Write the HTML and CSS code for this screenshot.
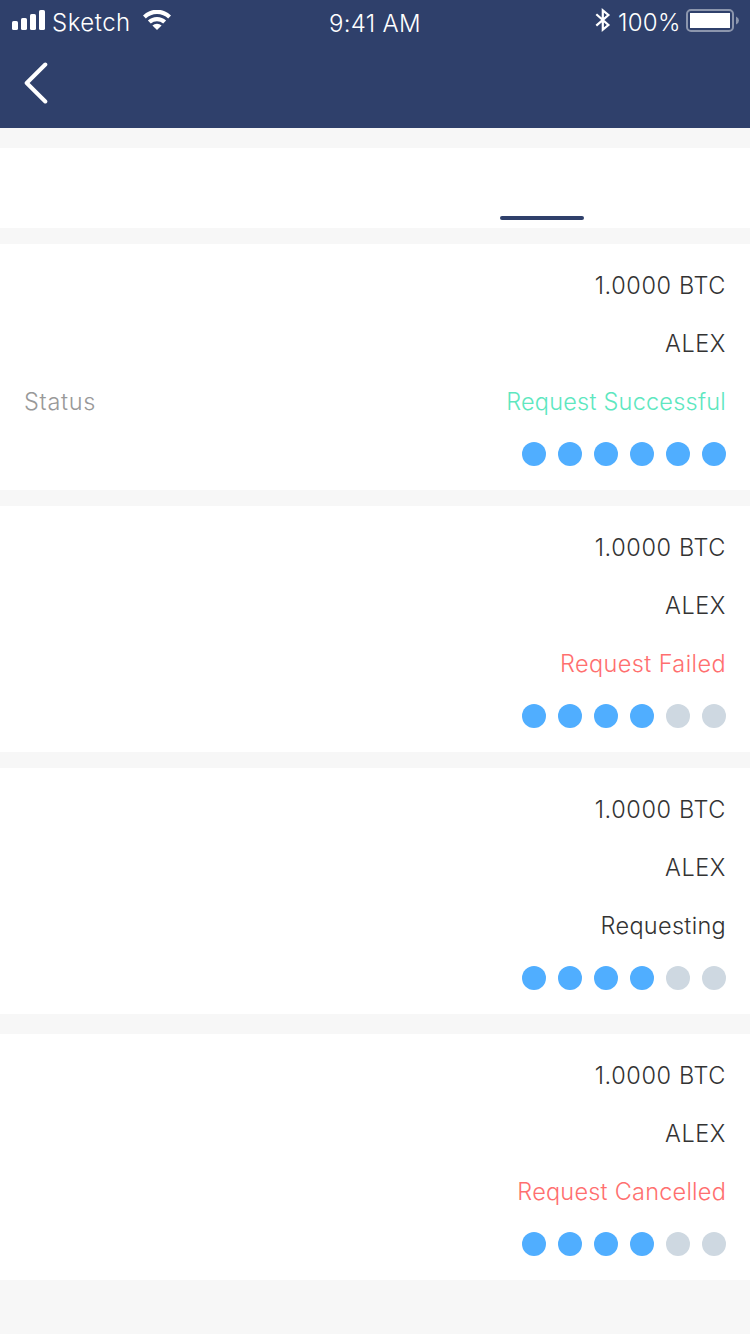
FILE: index.html
```html
<!DOCTYPE html>
<html lang="en">
<head>
<meta charset="utf-8">
<title>Requests</title>
<link rel="stylesheet" href="styles.css">
</head>
<body>
<header class="header">
  <div class="status-bar">
    <div class="status-left">
      <svg class="signal" width="34" height="20" viewBox="0 0 34 20" fill="#fff">
        <rect x="0" y="11" width="6" height="9" rx="1.6"/><rect x="9" y="8" width="6" height="12" rx="1.6"/><rect x="18" y="4" width="6" height="16" rx="1.6"/><rect x="27" y="0" width="6" height="20" rx="1.6"/>
      </svg>
      <span class="carrier">Sketch</span>
      <svg class="wifi" width="28" height="20" viewBox="0 0 28 20" fill="#fff">
        <path d="M0 5.4A20 20 0 0 1 28 5.4L25.2 8.5A16 16 0 0 0 2.8 8.5Z"/>
        <path d="M4.9 10.6A13.2 13.2 0 0 1 23.1 10.6L20.2 13.6A9.2 9.2 0 0 0 7.8 13.6Z"/>
        <path d="M9.4 15.5A6.6 6.6 0 0 1 18.6 15.5L14 20Z"/>
      </svg>
    </div>
    <span class="clock">9:41 AM</span>
    <div class="status-right">
      <svg class="bluetooth" width="16" height="24" viewBox="0 0 16 24" fill="none" stroke="#fff" stroke-width="2.2">
        <path d="M1.3 6.3L13.4 17L7.8 21.6V2.4L13.4 7L1.3 17.6"/>
      </svg>
      <span class="percent">100%</span>
      <svg class="battery" width="53" height="24" viewBox="0 0 53 24">
        <rect x="1" y="1" width="46" height="21" rx="4" fill="none" stroke="#fff" stroke-opacity=".45" stroke-width="2"/>
        <rect x="4" y="4" width="40" height="15" fill="#fff"/>
        <path d="M50 7.5Q53 9 53 11.5T50 15.5Z" fill="#fff" fill-opacity=".45"/>
      </svg>
    </div>
  </div>
  <nav class="nav-bar">
    <svg width="24" height="42" viewBox="0 0 24 42" fill="none" stroke="#fff" stroke-width="4" stroke-linecap="round" stroke-linejoin="round"><path d="M21.3 2.5L2.7 21L21.3 39.5"/></svg>
  </nav>
</header>
<div class="tabs"><span class="tab-indicator"></span></div>
<main class="list">
  <section class="card">
    <div class="row amount">1.0000 BTC</div>
    <div class="row name">ALEX</div>
    <div class="row"><span class="label">Status</span><span class="state success">Request Successful</span></div>
    <div class="dots"><i class="dot"></i><i class="dot"></i><i class="dot"></i><i class="dot"></i><i class="dot"></i><i class="dot"></i></div>
  </section>
  <section class="card">
    <div class="row amount">1.0000 BTC</div>
    <div class="row name">ALEX</div>
    <div class="row"><span class="state failed">Request Failed</span></div>
    <div class="dots"><i class="dot"></i><i class="dot"></i><i class="dot"></i><i class="dot"></i><i class="dot off"></i><i class="dot off"></i></div>
  </section>
  <section class="card">
    <div class="row amount">1.0000 BTC</div>
    <div class="row name">ALEX</div>
    <div class="row"><span class="state pending">Requesting</span></div>
    <div class="dots"><i class="dot"></i><i class="dot"></i><i class="dot"></i><i class="dot"></i><i class="dot off"></i><i class="dot off"></i></div>
  </section>
  <section class="card last">
    <div class="row amount">1.0000 BTC</div>
    <div class="row name">ALEX</div>
    <div class="row"><span class="state cancelled">Request Cancelled</span></div>
    <div class="dots"><i class="dot"></i><i class="dot"></i><i class="dot"></i><i class="dot"></i><i class="dot off"></i><i class="dot off"></i></div>
  </section>
</main>
</body>
</html>
```
FILE: styles.css
```css
* { box-sizing: border-box; }
body {
  margin: 0;
  min-height: 1334px;
  background: #f7f7f7;
  color: #333;
  font-family: Inter, "Liberation Sans", sans-serif;
  font-size: 23.5px;
  font-weight: 300;
}
.header { height: 128px; background: #2f406b; color: #fff; }
.status-bar {
  display: grid;
  grid-template-columns: 1fr auto 1fr;
  height: 40px;
  font-size: 24px;
  line-height: 46px;
}
.status-left { display: flex; align-items: flex-start; padding-left: 12px; }
.signal { margin-top: 10px; }
.carrier { margin-left: 6px; width: 91px; white-space: nowrap; letter-spacing: .5px; }
.wifi { margin-top: 10px; }
.clock { white-space: nowrap; line-height: 48px; letter-spacing: .3px; }
.status-right { display: flex; align-items: flex-start; justify-content: flex-end; padding-right: 11px; }
.bluetooth { margin: 8px 7px 0 0; }
.percent { width: 68px; white-space: nowrap; letter-spacing: .3px; }
.battery { margin: 9px 0 0; }
.nav-bar { padding: 22px 0 0 24px; }
.nav-bar svg { display: block; }
.tabs {
  display: flex;
  align-items: flex-end;
  height: 80px;
  margin: 20px 0 16px;
  padding: 0 0 8px 500px;
  background: #fff;
}
.tab-indicator { width: 84px; height: 4px; border-radius: 2px; background: #2f406b; }
.list { display: flex; flex-direction: column; gap: 16px; }
.card { height: 246px; padding: 13px 24px 24px; background: #fff; }
.card.last { margin-top: 4px; }
.row { display: flex; justify-content: flex-end; height: 58px; line-height: 58px; white-space: nowrap; }
.amount { letter-spacing: .6px; }
.name { letter-spacing: .6px; }
.label { margin-right: auto; color: #999; letter-spacing: .7px; }
.state { letter-spacing: .22px; }
.failed { letter-spacing: .4px; }
.pending { letter-spacing: .3px; }
.success { color: #5ee7bf; }
.failed, .cancelled { color: #ff6f6f; }
.dots { display: flex; justify-content: flex-end; gap: 12px; margin-top: 11px; }
.dot { width: 24px; height: 24px; border-radius: 50%; background: #50aeff; }
.dot.off { background: #ced8e1; }
```
